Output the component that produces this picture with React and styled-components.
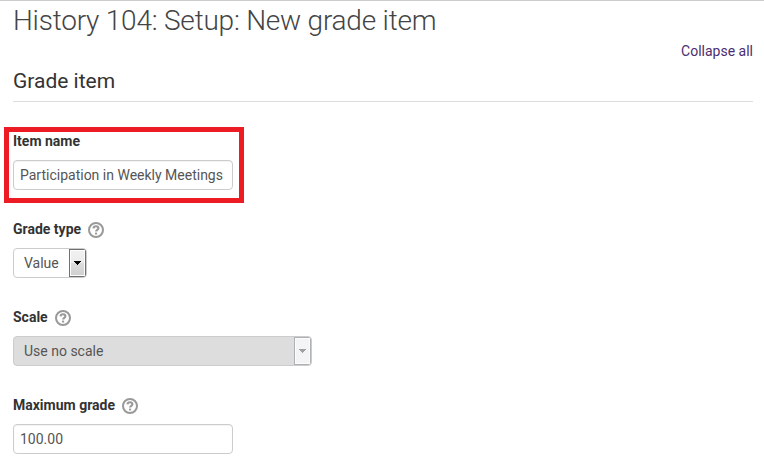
import React from "react";
import styled, { createGlobalStyle, css } from "styled-components";

const GlobalStyle = createGlobalStyle`
  *, *::before, *::after { box-sizing: border-box; }
  body {
    margin: 0;
    background: #fff;
    color: #333;
    font: 400 14px/20px Roboto, sans-serif;
    overflow: hidden;
  }
`;

const Page = styled.main`
  height: 463px;
  padding: 0 11px 0 13px;
  border-top: 1px solid #ccc;
  overflow: hidden;
`;

const Title = styled.h1`
  margin: 0;
  height: 40px;
  color: #444;
  font-size: 28px;
  font-weight: 300;
  letter-spacing: -0.22px;
  line-height: 39px;
  white-space: nowrap;
`;

const Actions = styled.div`
  display: flex;
  justify-content: flex-end;
  height: 20px;
`;

const CollapseLink = styled.a`
  color: #4b2e6f;
  text-decoration: none;
  cursor: pointer;
`;

const SectionHeading = styled.h2`
  margin: 0;
  height: 41px;
  border-bottom: 1px solid #ddd;
  font-size: 21px;
  font-weight: 400;
  line-height: 40px;
`;

const Form = styled.form`
  padding-top: 29px;
`;

const Field = styled.div`
  position: relative;
  height: 88px;
`;

const Highlight = styled.div`
  position: absolute;
  top: -4px;
  left: -9px;
  width: 240px;
  height: 76px;
  border: 5px solid #ed1c24;
  pointer-events: none;
`;

const LabelRow = styled.div`
  display: flex;
  align-items: flex-start;
  gap: 7px;
  height: 29px;
`;

const Label = styled.label`
  font-weight: 700;
`;

const HelpSvg = styled.svg`
  width: 16px;
  height: 16px;
  margin-top: 3px;
`;

const TextInput = styled.input`
  display: block;
  width: 220px;
  height: 30px;
  padding: 4px 6px;
  border: 1px solid #ccc;
  border-radius: 4px;
  background: #fff;
  box-shadow: inset 0 1px 1px rgba(0, 0, 0, 0.05);
  color: #555;
  font: inherit;
  outline: none;
`;

const SelectBox = styled.div`
  display: flex;
  align-items: stretch;
  width: ${(p) => p.$width}px;
  height: 30px;
  border: 1px solid #ccc;
  border-radius: 4px;
  background: #fff;
  color: #555;
  overflow: hidden;
  ${(p) => p.$disabled && css`background: #ddd;`}
`;

const SelectValue = styled.span`
  flex: 1;
  padding-left: 10px;
  line-height: 28px;
`;

const ArrowButton = styled.span`
  display: flex;
  align-items: center;
  justify-content: center;
  width: 17px;
  border: 1px solid ${(p) => (p.$disabled ? "#adb2b5" : "#707070")};
  box-shadow: inset 0 0 0 1px #fcfcfc;
  background: ${(p) =>
    p.$disabled
      ? "#f4f4f4"
      : "linear-gradient(#f2f2f2 0%, #ebebeb 50%, #ddd 50%, #cfcfcf 100%)"};
  color: ${(p) => (p.$disabled ? "#a0a0a0" : "#000")};
`;

function HelpIcon() {
  return (
    <HelpSvg viewBox="0 0 16 16" fill="none" aria-label="Help">
      <circle cx="8" cy="8" r="7" stroke="#999" strokeWidth="2" />
      <path d="M5.5 6.4C5.6 4.9 6.6 4.3 8 4.3c1.5 0 2.4.7 2.4 1.9 0 1.6-2.3 1.6-2.3 3.4" stroke="#999" strokeWidth="2.1" />
      <path d="M7 10.6h2.1v1.9H7z" fill="#999" />
    </HelpSvg>
  );
}

function Select({ value, width, disabled }) {
  return (
    <SelectBox $width={width} $disabled={disabled} role="combobox" aria-disabled={disabled}>
      <SelectValue>{value}</SelectValue>
      <ArrowButton $disabled={disabled}>
        <svg width="7" height="4" viewBox="0 0 7 4" shapeRendering="crispEdges">
          <path d="M0 0h7v1H6v1H5v1H4v1H3V3H2V2H1V1H0z" fill="currentColor" />
        </svg>
      </ArrowButton>
    </SelectBox>
  );
}

function FormField({ label, help, highlighted, children }) {
  return (
    <Field>
      <LabelRow>
        <Label>{label}</Label>
        {help && <HelpIcon />}
      </LabelRow>
      {children}
      {highlighted && <Highlight />}
    </Field>
  );
}

export default function App() {
  return (
    <>
      <GlobalStyle />
      <Page>
        <Title>History 104: Setup: New grade item</Title>
        <Actions>
          <CollapseLink>Collapse all</CollapseLink>
        </Actions>
        <SectionHeading>Grade item</SectionHeading>
        <Form>
          <FormField label="Item name" highlighted>
            <TextInput defaultValue="Participation in Weekly Meetings" aria-label="Item name" />
          </FormField>
          <FormField label="Grade type" help>
            <Select value="Value" width={74} />
          </FormField>
          <FormField label="Scale" help>
            <Select value="Use no scale" width={299} disabled />
          </FormField>
          <FormField label="Maximum grade" help>
            <TextInput defaultValue="100.00" aria-label="Maximum grade" />
          </FormField>
        </Form>
      </Page>
    </>
  );
}
